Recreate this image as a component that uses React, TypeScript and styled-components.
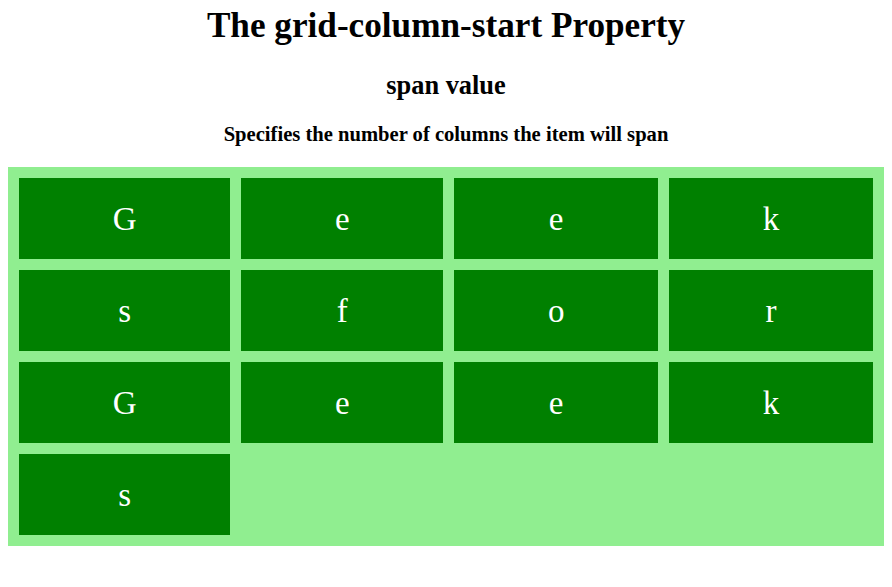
import React from "react";
import styled, { createGlobalStyle } from "styled-components";

const Global = createGlobalStyle`
  html, body {
    margin: 0;
    padding: 0;
    background: #ffffff;
    font-family: "Liberation Serif", "Times New Roman", serif;
    color: #000000;
  }
`;

const Page = styled.div`
  padding: 0 8px;
  text-align: center;
`;

const Title = styled.h1`
  font-size: 35.2px;
  font-weight: bold;
  margin: 0 0 24px;
  padding-top: 6px;
`;

const Subtitle = styled.h2`
  font-size: 26.4px;
  font-weight: bold;
  margin: 0 0 22px;
`;

const Caption = styled.h3`
  font-size: 20.6px;
  font-weight: bold;
  margin: 0 0 21px;
`;

const Grid = styled.div`
  display: grid;
  grid-template-columns: auto auto auto auto;
  gap: 11px;
  padding: 11px;
  background: #90ee90;
`;

const Cell = styled.div`
  background: #008000;
  color: #ffffff;
  font-size: 33px;
  line-height: 39px;
  padding: 22px 0 20px;
  text-align: center;
`;

const letters = ["G", "e", "e", "k", "s", "f", "o", "r", "G", "e", "e", "k", "s"];

export default function App() {
  return (
    <>
      <Global />
      <Page>
        <Title>The grid-column-start Property</Title>
        <Subtitle>span value</Subtitle>
        <Caption>Specifies the number of columns the item will span</Caption>
        <Grid>
          {letters.map((l, i) => (
            <Cell key={i}>{l}</Cell>
          ))}
        </Grid>
      </Page>
    </>
  );
}
